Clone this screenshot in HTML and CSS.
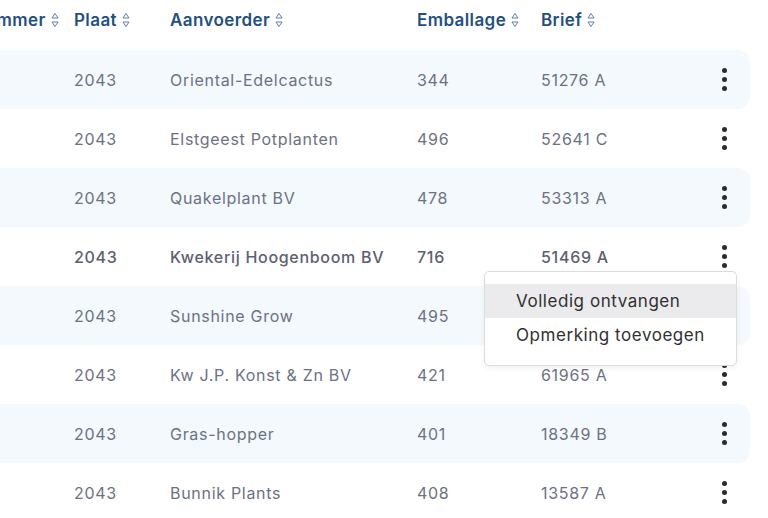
FILE: index.html
```html
<!DOCTYPE html>
<html lang="nl">
<head>
<meta charset="utf-8">
<title>Aanvoer</title>
<link rel="stylesheet" href="styles.css">
</head>
<body>
<div class="viewport">
  <div class="table">
    <div class="row head">
      <div class="cell"><span class="th">Partijnummer<svg class="sort" viewBox="0 0 8 16"><path d="M4 1.5 L7 6 L1 6 Z"/><path d="M1 10 L7 10 L4 14.5 Z"/></svg></span></div>
      <div class="cell"><span class="th">Plaat<svg class="sort" viewBox="0 0 8 16"><path d="M4 1.5 L7 6 L1 6 Z"/><path d="M1 10 L7 10 L4 14.5 Z"/></svg></span></div>
      <div class="cell"><span class="th">Aanvoerder<svg class="sort" viewBox="0 0 8 16"><path d="M4 1.5 L7 6 L1 6 Z"/><path d="M1 10 L7 10 L4 14.5 Z"/></svg></span></div>
      <div class="cell"><span class="th">Emballage<svg class="sort" viewBox="0 0 8 16"><path d="M4 1.5 L7 6 L1 6 Z"/><path d="M1 10 L7 10 L4 14.5 Z"/></svg></span></div>
      <div class="cell"><span class="th">Brief<svg class="sort" viewBox="0 0 8 16"><path d="M4 1.5 L7 6 L1 6 Z"/><path d="M1 10 L7 10 L4 14.5 Z"/></svg></span></div>
      <div class="cell"></div>
    </div>

    <div class="row striped">
      <div class="cell"></div><div class="cell">2043</div><div class="cell">Oriental-Edelcactus</div><div class="cell">344</div><div class="cell">51276 A</div>
      <div class="cell act"><span class="kebab"><i></i><i></i><i></i></span></div>
    </div>
    <div class="row">
      <div class="cell"></div><div class="cell">2043</div><div class="cell">Elstgeest Potplanten</div><div class="cell">496</div><div class="cell">52641 C</div>
      <div class="cell act"><span class="kebab"><i></i><i></i><i></i></span></div>
    </div>
    <div class="row striped">
      <div class="cell"></div><div class="cell">2043</div><div class="cell">Quakelplant BV</div><div class="cell">478</div><div class="cell">53313 A</div>
      <div class="cell act"><span class="kebab"><i></i><i></i><i></i></span></div>
    </div>
    <div class="row active">
      <div class="cell"></div><div class="cell">2043</div><div class="cell">Kwekerij Hoogenboom BV</div><div class="cell">716</div><div class="cell">51469 A</div>
      <div class="cell act"><span class="kebab"><i></i><i></i><i></i></span></div>
      <div class="menu">
        <div class="item hl">Volledig ontvangen</div>
        <div class="item">Opmerking toevoegen</div>
      </div>
    </div>
    <div class="row striped">
      <div class="cell"></div><div class="cell">2043</div><div class="cell">Sunshine Grow</div><div class="cell">495</div><div class="cell">51877 A</div>
      <div class="cell act"><span class="kebab"><i></i><i></i><i></i></span></div>
    </div>
    <div class="row">
      <div class="cell"></div><div class="cell">2043</div><div class="cell">Kw J.P. Konst &amp; Zn BV</div><div class="cell">421</div><div class="cell">61965 A</div>
      <div class="cell act"><span class="kebab"><i></i><i></i><i></i></span></div>
    </div>
    <div class="row striped">
      <div class="cell"></div><div class="cell">2043</div><div class="cell">Gras-hopper</div><div class="cell">401</div><div class="cell">18349 B</div>
      <div class="cell act"><span class="kebab"><i></i><i></i><i></i></span></div>
    </div>
    <div class="row">
      <div class="cell"></div><div class="cell">2043</div><div class="cell">Bunnik Plants</div><div class="cell">408</div><div class="cell">13587 A</div>
      <div class="cell act"><span class="kebab"><i></i><i></i><i></i></span></div>
    </div>
  </div>
</div>
</body>
</html>
```

FILE: styles.css
```css
html, body {
  margin: 0;
  padding: 0;
  background: #ffffff;
  overflow: hidden;
}
body {
  font-family: Inter, "Noto Sans", sans-serif;
  font-size: 16px;
  letter-spacing: 0.7px;
  color: #6c7184;
}
.viewport {
  width: 768px;
  height: 518px;
  overflow: hidden;
}
.table {
  margin-left: -70px;
  width: 820px;
}
.row {
  display: grid;
  grid-template-columns: 144px 96px 247px 124px 160px 49px;
  height: 59px;
  align-items: center;
  border-radius: 0 12px 12px 0;
  position: relative;
}
.row.head {
  height: 50px;
  align-items: start;
}
.row.head .cell {
  padding-top: 10px;
}
.striped {
  background: #f4f9fd;
}
.cell {
  white-space: nowrap;
}
.th {
  display: inline-flex;
  align-items: center;
  gap: 5px;
  color: #1f5084;
  font-weight: 600;
  font-size: 17px;
  letter-spacing: 0.4px;
}
.sort {
  width: 8px;
  height: 16px;
  fill: none;
  stroke: #5b80ab;
  stroke-width: 1;
}
.active {
  font-weight: 500;
  color: #5c6072;
}
.act {
  display: flex;
  justify-content: flex-start;
}
.kebab {
  display: flex;
  flex-direction: column;
  gap: 4px;
  margin-left: 21px;
}
.kebab i {
  display: block;
  width: 5px;
  height: 5px;
  border-radius: 50%;
  background: #2b2b2b;
}
.menu {
  position: absolute;
  top: 44px;
  right: 13px;
  width: 251px;
  padding: 12px 0 13px;
  background: #ffffff;
  border: 1px solid #dcdcdc;
  border-radius: 5px;
  box-shadow: 0 2px 6px rgba(0,0,0,0.06);
  z-index: 5;
  font-weight: 400;
  color: #303030;
  font-size: 17px;
  letter-spacing: 0.55px;
}
.item {
  height: 34px;
  line-height: 34px;
  padding-left: 31px;
}
.item.hl {
  background: #ebebed;
}
```
